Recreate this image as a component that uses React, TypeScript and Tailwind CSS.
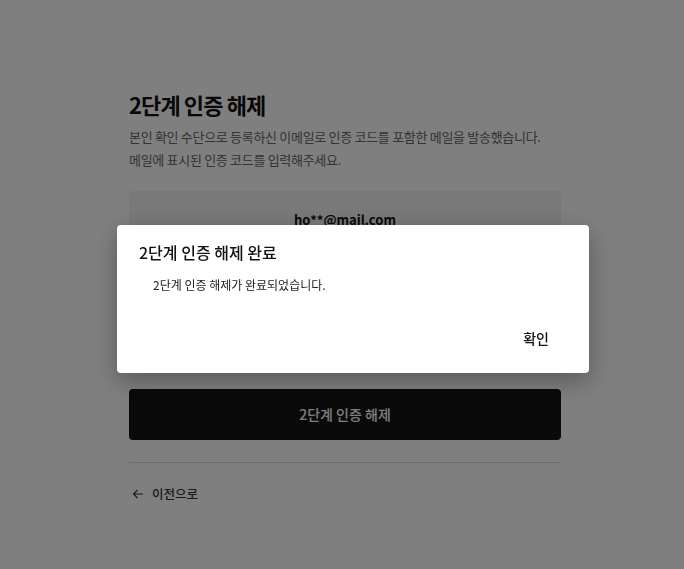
import React from "react";

const font = { fontFamily: '"Noto Sans CJK KR", "Noto Sans", sans-serif' };

function ArrowLeft() {
  return (
    <svg className="h-3 w-3" viewBox="0 0 12 12" fill="none">
      <path d="M11 6H1.5M5.5 2L1.5 6l4 4" stroke="currentColor" strokeWidth="1.1" />
    </svg>
  );
}

export default function App() {
  return (
    <div className="relative min-h-[569px] bg-white" style={font}>
      <div className="flex justify-center pl-[6px] pt-[86px]">
        <div className="w-[432px]">
          <h1 className="text-[22px] font-bold leading-[36px] text-[#111] tracking-[-0.9px]">
            2단계 인증 해제
          </h1>
          <p className="mt-[3px] text-[13px] leading-[23px] text-[#666] tracking-[-0.3px]">
            본인 확인 수단으로 등록하신 이메일로 인증 코드를 포함한 메일을 발송했습니다.
            <br />
            메일에 표시된 인증 코드를 입력해주세요.
          </p>
          <div className="mt-[20px] flex h-[178px] flex-col items-center rounded-[4px] bg-[#f2f2f2] pt-[19px]">
            <span className="text-[13px] font-bold leading-[20px] text-[#111]">ho**@mail.com</span>
          </div>
          <button className="mt-[20px] flex h-[51px] w-full items-center justify-center rounded-[4px] bg-[#141414] text-[14px] font-medium text-white">
            2단계 인증 해제
          </button>
          <div className="mt-[22px] border-t border-[#dcdcdc]" />
          <button className="mt-[22px] flex items-center gap-[8px] pl-[3px] text-[12.5px] font-medium text-[#333]">
            <ArrowLeft />
            <span>이전으로</span>
          </button>
        </div>
      </div>

      <div className="fixed inset-0 bg-black/50" />
      <div className="fixed left-[117px] top-[225px] flex h-[148px] w-[472px] flex-col rounded-[4px] bg-white shadow-[0_8px_24px_rgba(0,0,0,0.3)]">
        <h2 className="pl-[22px] pt-[15px] text-[16px] font-medium leading-[24px] text-[#111]">
          2단계 인증 해제 완료
        </h2>
        <p className="pl-[36px] pt-[11px] text-[12px] leading-[20px] text-[#222]">
          2단계 인증 해제가 완료되었습니다.
        </p>
        <div className="mt-auto flex justify-end pb-[20px] pr-[28px]">
          <button className="px-[12px] py-[4px] text-[14px] font-medium text-[#111]">확인</button>
        </div>
      </div>
    </div>
  );
}
